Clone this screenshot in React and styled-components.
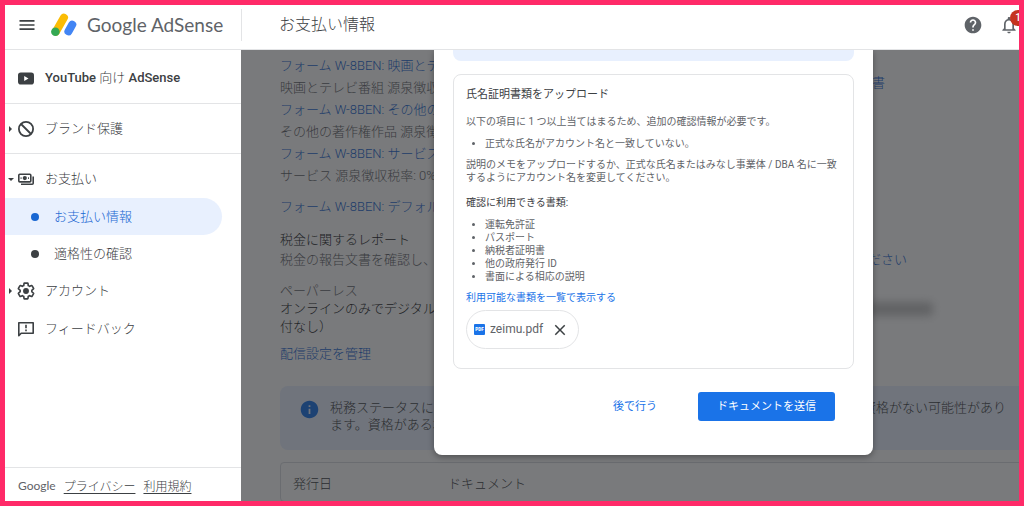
import React from "react";
import styled, { createGlobalStyle, ThemeProvider } from "styled-components";
import { MdMenu, MdHelp, MdNotificationsNone, MdInfo, MdClose } from "react-icons/md";

const theme = {
  frame: "#ff2a68",
  blue: "#1a73e8",
  link: "#1967d2",
  blue_light: "#e8f0fe",
  text_primary: "#3c4043",
  text_secondary: "#5f6368",
  line: "#e3e4e6",
};

const GlobalStyle = createGlobalStyle`
  * {
    box-sizing: border-box;
  }
  body {
    margin: 0;
    font-family: Roboto, "Noto Sans CJK JP", sans-serif;
    font-size: 13px;
    font-weight: 300;
    color: ${({ theme }) => theme.text_primary};
  }
  a {
    color: inherit;
    text-decoration: none;
  }
  button {
    font: inherit;
    border: 0;
    background: none;
    padding: 0;
    cursor: pointer;
  }
`;

const Page = styled.div`
  display: flex;
  flex-direction: column;
  height: 100vh;
  border: 5px solid ${({ theme }) => theme.frame};
  background: #fff;
  overflow: hidden;
`;

const Header = styled.header`
  flex: none;
  display: flex;
  align-items: center;
  height: 45px;
  padding-bottom: 4px;
  border-bottom: 1px solid ${({ theme }) => theme.line};
`;

const Brand = styled.div`
  flex: none;
  display: flex;
  align-items: center;
  width: 237px;
  height: 32px;
  padding-left: 12px;
  border-right: 1px solid ${({ theme }) => theme.line};
`;

const IconButton = styled.button`
  position: relative;
  display: flex;
  color: ${({ $dark, theme }) => ($dark ? theme.text_primary : theme.text_secondary)};
`;

const Logo = styled.a`
  display: flex;
  align-items: center;
  gap: 10px;
  margin-left: 14px;
  font-family: Lato, sans-serif;
  font-size: 19px;
  font-weight: 400;
  line-height: 24px;
  white-space: nowrap;
  color: ${({ theme }) => theme.text_secondary};
`;

const Title = styled.h1`
  flex: 1;
  margin: 0;
  padding-left: 37px;
  font-size: 16px;
  font-weight: 300;
  line-height: 24px;
`;

const Tools = styled.div`
  flex: none;
  display: flex;
  align-items: center;
  gap: 16px;
`;

const Badge = styled.span`
  position: absolute;
  top: -5px;
  right: -7px;
  width: 16px;
  height: 16px;
  border-radius: 50%;
  background: #c5341f;
  color: #fff;
  font-size: 10px;
  font-weight: 500;
  line-height: 16px;
  text-align: center;
`;

const Body = styled.div`
  flex: 1;
  min-height: 0;
  display: flex;
`;

const Sidebar = styled.nav`
  flex: none;
  display: flex;
  flex-direction: column;
  width: 236px;
`;

const NavSection = styled.div`
  padding: ${({ $first }) => ($first ? "9px 0 6px" : "6px 0 5px")};
  border-bottom: ${({ $last, theme }) => ($last ? "0" : `1px solid ${theme.line}`)};
`;

const NavLink = styled.a`
  display: flex;
  align-items: center;
  height: 38px;
  padding-left: 4px;
  font-weight: ${({ $strong }) => ($strong ? 500 : 300)};

  > svg {
    flex: none;
    width: 18px;
    height: 18px;
    margin-right: 10px;
  }
`;

const Label = styled.span`
  padding-bottom: 3px;

  i {
    font-style: normal;
    font-weight: 300;
  }
`;

const Arrow = styled.span`
  flex: none;
  width: 8px;

  &::before {
    content: "";
    display: ${({ $dir }) => ($dir ? "block" : "none")};
    width: 0;
    border: 3px solid transparent;
    border-left-color: ${({ $dir }) => ($dir === "right" ? "#3c4043" : "transparent")};
    border-top-color: ${({ $dir }) => ($dir === "down" ? "#3c4043" : "transparent")};
    margin-top: ${({ $dir }) => ($dir === "down" ? "3px" : "0")};
    margin-left: ${({ $dir }) => ($dir === "down" ? "-1px" : "0")};
  }
`;

const SubLink = styled.a`
  display: flex;
  align-items: center;
  gap: 15px;
  height: 37px;
  margin-right: 19px;
  padding-left: 26px;
  border-radius: 0 19px 19px 0;
  background: ${({ $active, theme }) => ($active ? theme.blue_light : "transparent")};
  color: ${({ $active, theme }) => ($active ? theme.link : theme.text_primary)};

  &::before {
    content: "";
    width: 8px;
    height: 8px;
    border-radius: 50%;
    background: currentColor;
  }
`;

const Footer = styled.div`
  display: flex;
  align-items: center;
  gap: 8px;
  height: 34px;
  margin-top: auto;
  padding: 2px 13px 0;
  border-top: 1px solid ${({ theme }) => theme.line};
  font-size: 12px;

  a {
    text-decoration: underline;
    text-underline-offset: 2px;
  }
`;

const GoogleMark = styled.span`
  font-family: Lato, sans-serif;
  font-weight: 400;
  color: ${({ theme }) => theme.text_secondary};
`;

const Main = styled.main`
  position: relative;
  flex: 1;
  min-width: 0;
  overflow: hidden;
`;

const Content = styled.div`
  margin-right: -20px;
  padding: 5px 0 0 39px;
`;

const Columns = styled.div`
  display: flex;
  justify-content: space-between;
  height: 331px;
`;

const FormList = styled.ul`
  margin: 0 0 12px;
  padding: 0;
  list-style: none;
  line-height: 22px;
  white-space: nowrap;
  color: ${({ theme }) => theme.text_secondary};

  li:last-child {
    margin-top: 9px;
  }
`;

const BlueLink = styled.a`
  display: block;
  color: ${({ theme }) => theme.link};
`;

const Group = styled.section`
  width: 172px;
  margin-bottom: ${({ $gap }) => $gap}px;
  line-height: ${({ $line }) => $line}px;
`;

const Strong = styled.div`
  color: #202124;
`;

const Muted = styled.div`
  white-space: nowrap;
  color: ${({ theme }) => theme.text_secondary};
`;

const SideColumn = styled.div`
  display: flex;
  flex-direction: column;
  align-items: flex-end;
  padding-top: 17px;
  line-height: 22px;
  white-space: nowrap;
`;

const SideItem = styled.div`
  padding-right: ${({ $right }) => $right}px;
  margin-bottom: ${({ $gap }) => $gap || 0}px;
`;

const Redacted = styled.div`
  width: 66px;
  height: 14px;
  border-radius: 4px;
  background: #c4c4c4;
  filter: blur(4px);
`;

const Notice = styled.div`
  display: flex;
  gap: 10px;
  height: 64px;
  margin-bottom: 12px;
  padding: 13px 33px 0 19px;
  border-radius: 8px;
  background: ${({ theme }) => theme.blue_light};
  line-height: 17px;
  white-space: nowrap;

  svg {
    flex: none;
    color: ${({ theme }) => theme.blue};
  }
`;

const NoticeText = styled.p`
  flex: 1;
  display: flex;
  justify-content: space-between;
  margin: 0;
`;

const TableBox = styled.div`
  border: 1px solid #dadce0;
  border-radius: 4px;
`;

const Table = styled.table`
  width: 100%;
  border-collapse: collapse;
  table-layout: fixed;

  th {
    height: 38px;
    padding: 0 12px;
    font-weight: 300;
    text-align: left;
  }
  th:first-child {
    width: 155px;
  }
`;

const Overlay = styled.div`
  position: absolute;
  inset: 0;
  display: flex;
  justify-content: center;
  align-items: flex-start;
  padding-left: 47px;
  background: rgba(32, 33, 36, 0.6);
`;

const Dialog = styled.div`
  width: 439px;
  padding: 0 19px 34px;
  border-radius: 0 0 8px 8px;
  background: #fff;
  box-shadow: 0 2px 6px rgba(0, 0, 0, 0.35);
  font-size: 10px;
  font-weight: 400;
  line-height: 13px;
  color: ${({ theme }) => theme.text_secondary};
`;

const Banner = styled.div`
  height: 11px;
  margin-bottom: 13px;
  border-radius: 0 0 8px 8px;
  background: ${({ theme }) => theme.blue_light};
`;

const Card = styled.div`
  padding: 12px 12px 19px;
  border: 1px solid ${({ theme }) => theme.line};
  border-radius: 8px;

  h2 {
    margin: 0 0 12px;
    font-size: 11px;
    font-weight: 400;
    line-height: 16px;
    color: ${({ theme }) => theme.text_primary};
  }
  p {
    margin: 0 0 9px;
  }
  ul {
    margin: 0 0 8px;
    padding-left: 19px;
  }
  h3 {
    margin: 12px 0 9px;
    font-size: 10px;
    font-weight: 400;
    color: ${({ theme }) => theme.text_primary};
  }
  a {
    color: ${({ theme }) => theme.blue};
  }
`;

const FileChip = styled.div`
  display: flex;
  align-items: center;
  width: max-content;
  height: 39px;
  margin-top: 6px;
  padding: 0 9px 0 7px;
  border: 1px solid ${({ theme }) => theme.line};
  border-radius: 20px;
  font-size: 12px;

  span {
    margin: 0 8px 0 5px;
  }
`;

const Actions = styled.div`
  display: flex;
  justify-content: flex-end;
  align-items: center;
  gap: 41px;
  padding: 23px 19px 0 0;
`;

const TextButton = styled.button`
  color: ${({ theme }) => theme.blue};
  font-size: 11px;
`;

const PrimaryButton = styled.button`
  height: 29px;
  padding: 0 19px;
  border-radius: 3px;
  background: ${({ theme }) => theme.blue};
  color: #fff;
  font-size: 11px;
`;

const AdSenseLogo = () => (
  <svg width="26" height="24" viewBox="0 0 26 24" fill="none" aria-hidden="true">
    <path d="M13 4.6 5 18.5" stroke="#fbbc04" strokeWidth="8" strokeLinecap="round" />
    <path d="M21.3 11.6 17.4 18.4" stroke="#4285f4" strokeWidth="8" strokeLinecap="round" />
    <circle cx="4.4" cy="18.8" r="4.3" fill="#34a853" />
  </svg>
);

const YoutubeIcon = () => (
  <svg viewBox="0 0 18 18" aria-hidden="true">
    <rect x="1" y="3.5" width="16" height="12" rx="2.8" fill="#3c4043" />
    <path d="M7.2 7v5l4.3-2.5z" fill="#fff" />
  </svg>
);

const BlockIcon = () => (
  <svg viewBox="0 0 18 18" fill="none" stroke="#3c4043" strokeWidth="1.8" aria-hidden="true">
    <circle cx="9" cy="9" r="7.1" />
    <path d="m4 4 10 10" />
  </svg>
);

const PaymentsIcon = () => (
  <svg viewBox="0 0 18 18" fill="none" stroke="#3c4043" aria-hidden="true">
    <rect x="1.8" y="4.3" width="12" height="7.6" rx="1" strokeWidth="1.6" />
    <circle cx="7.8" cy="8.1" r="2.1" fill="#3c4043" stroke="none" />
    <path d="M3.6 8.1h.9M11.1 8.1h.9" strokeWidth="1.6" />
    <path d="M4 14.3h11.2q1 0 1-1V6.6" strokeWidth="1.6" />
  </svg>
);

const GearIcon = () => (
  <svg viewBox="1 1 22 22" fill="none" stroke="#3c4043" strokeWidth="2" aria-hidden="true">
    <path d="M19.14 12.94c.04-.3.06-.61.06-.94 0-.32-.02-.64-.07-.94l2.03-1.58c.18-.14.23-.41.12-.61l-1.92-3.32c-.12-.22-.37-.29-.59-.22l-2.39.96c-.5-.38-1.03-.7-1.62-.94l-.36-2.54c-.04-.24-.24-.41-.48-.41h-3.84c-.24 0-.43.17-.47.41l-.36 2.54c-.59.24-1.13.57-1.62.94l-2.39-.96c-.22-.08-.47 0-.59.22L2.74 8.87c-.12.21-.08.47.12.61l2.03 1.58c-.05.3-.09.63-.09.94s.02.64.07.94l-2.03 1.58c-.18.14-.23.41-.12.61l1.92 3.32c.12.22.37.29.59.22l2.39-.96c.5.38 1.03.7 1.62.94l.36 2.54c.05.24.24.41.48.41h3.84c.24 0 .44-.17.47-.41l.36-2.54c.59-.24 1.13-.56 1.62-.94l2.39.96c.22.08.47 0 .59-.22l1.92-3.32c.12-.22.07-.47-.12-.61z" />
    <circle cx="12" cy="12" r="3.6" fill="#3c4043" stroke="none" />
  </svg>
);

const FeedbackIcon = () => (
  <svg viewBox="0 0 18 18" fill="none" stroke="#3c4043" strokeWidth="1.6" aria-hidden="true">
    <path d="M1.8 15.6V2.8h14.4v10.4H4.2z" strokeLinejoin="round" />
    <path d="M9 4.8v3.4M9 9.4v1.8" />
  </svg>
);

const PdfIcon = () => (
  <svg width="11" height="11" viewBox="0 0 11 11" aria-hidden="true">
    <rect width="11" height="11" rx="1" fill="#1a73e8" />
    <text x="5.5" y="7.4" textAnchor="middle" fontFamily="Roboto, sans-serif" fontSize="4.6" fontWeight="900" fill="#fff">PDF</text>
  </svg>
);

const forms = [
  { name: "フォーム W-8BEN: 映画とテ", rate: "映画とテレビ番組 源泉徴収" },
  { name: "フォーム W-8BEN: その他の", rate: "その他の著作権作品 源泉徴" },
  { name: "フォーム W-8BEN: サービス", rate: "サービス 源泉徴収税率: 0%" },
  { name: "フォーム W-8BEN: デフォル" },
];

const documents = ["運転免許証", "パスポート", "納税者証明書", "他の政府発行 ID", "書面による相応の説明"];

const Navigation = () => (
  <Sidebar>
    <NavSection $first>
      <NavLink href="#youtube" $strong><Arrow /><YoutubeIcon /><Label>YouTube <i>向け</i> AdSense</Label></NavLink>
    </NavSection>
    <NavSection>
      <NavLink href="#brand"><Arrow $dir="right" /><BlockIcon /><Label>ブランド保護</Label></NavLink>
    </NavSection>
    <NavSection $last>
      <NavLink href="#payments"><Arrow $dir="down" /><PaymentsIcon /><Label>お支払い</Label></NavLink>
      <SubLink href="#info" $active><Label>お支払い情報</Label></SubLink>
      <SubLink href="#verify"><Label>適格性の確認</Label></SubLink>
      <NavLink href="#account"><Arrow $dir="right" /><GearIcon /><Label>アカウント</Label></NavLink>
      <NavLink href="#feedback"><Arrow /><FeedbackIcon /><Label>フィードバック</Label></NavLink>
    </NavSection>
    <Footer>
      <GoogleMark>Google</GoogleMark>
      <a href="#privacy">プライバシー</a>
      <a href="#terms">利用規約</a>
    </Footer>
  </Sidebar>
);

const UploadDialog = () => (
  <Dialog role="dialog" aria-labelledby="upload-title">
    <Banner />
    <Card>
      <h2 id="upload-title">氏名証明書類をアップロード</h2>
      <p>以下の項目に 1 つ以上当てはまるため、追加の確認情報が必要です。</p>
      <ul>
        <li>正式な氏名がアカウント名と一致していない。</li>
      </ul>
      <p>説明のメモをアップロードするか、正式な氏名またはみなし事業体 / DBA 名に一致するようにアカウント名を変更してください。</p>
      <h3>確認に利用できる書類:</h3>
      <ul>
        {documents.map((name) => <li key={name}>{name}</li>)}
      </ul>
      <a href="#documents">利用可能な書類を一覧で表示する</a>
      <FileChip>
        <PdfIcon />
        <span>zeimu.pdf</span>
        <IconButton $dark aria-label="削除"><MdClose size={18} /></IconButton>
      </FileChip>
    </Card>
    <Actions>
      <TextButton>後で行う</TextButton>
      <PrimaryButton>ドキュメントを送信</PrimaryButton>
    </Actions>
  </Dialog>
);

const App = () => {
  return (
    <ThemeProvider theme={theme}>
      <GlobalStyle />
      <Page>
        <Header>
          <Brand>
            <IconButton $dark aria-label="メニュー"><MdMenu size={20} /></IconButton>
            <Logo href="#home"><AdSenseLogo />Google AdSense</Logo>
          </Brand>
          <Title>お支払い情報</Title>
          <Tools>
            <IconButton aria-label="ヘルプ"><MdHelp size={20} /></IconButton>
            <IconButton aria-label="通知"><MdNotificationsNone size={20} /><Badge>1</Badge></IconButton>
          </Tools>
        </Header>
        <Body>
          <Navigation />
          <Main>
            <Content>
              <Columns>
                <div>
                  <FormList>
                    {forms.map((form) => (
                      <li key={form.name}>
                        <BlueLink href="#form">{form.name}</BlueLink>
                        {form.rate}
                      </li>
                    ))}
                  </FormList>
                  <Group $line={20} $gap={12}>
                    <Strong>税金に関するレポート</Strong>
                    <Muted>税金の報告文書を確認し、</Muted>
                  </Group>
                  <Group $line={18} $gap={8}>
                    <Muted>ペーパーレス</Muted>
                    <Strong>オンラインのみでデジタルの付なし）</Strong>
                  </Group>
                  <Group $line={20} $gap={0}>
                    <BlueLink href="#delivery">配信設定を管理</BlueLink>
                  </Group>
                </div>
                <SideColumn>
                  <SideItem $right={154} $gap={155}><BlueLink href="#tax">書</BlueLink></SideItem>
                  <SideItem $right={132} $gap={31}><BlueLink href="#confirm">ください</BlueLink></SideItem>
                  <SideItem $right={106}><Redacted /></SideItem>
                </SideColumn>
              </Columns>
              <Notice>
                <MdInfo size={21} />
                <NoticeText>
                  <span>税務ステータスによ<br />ます。資格がある場</span>
                  <span>資格がない可能性があり</span>
                </NoticeText>
              </Notice>
              <TableBox>
                <Table>
                  <thead>
                    <tr><th>発行日</th><th>ドキュメント</th></tr>
                  </thead>
                </Table>
              </TableBox>
            </Content>
            <Overlay>
              <UploadDialog />
            </Overlay>
          </Main>
        </Body>
      </Page>
    </ThemeProvider>
  );
};

export default App;
